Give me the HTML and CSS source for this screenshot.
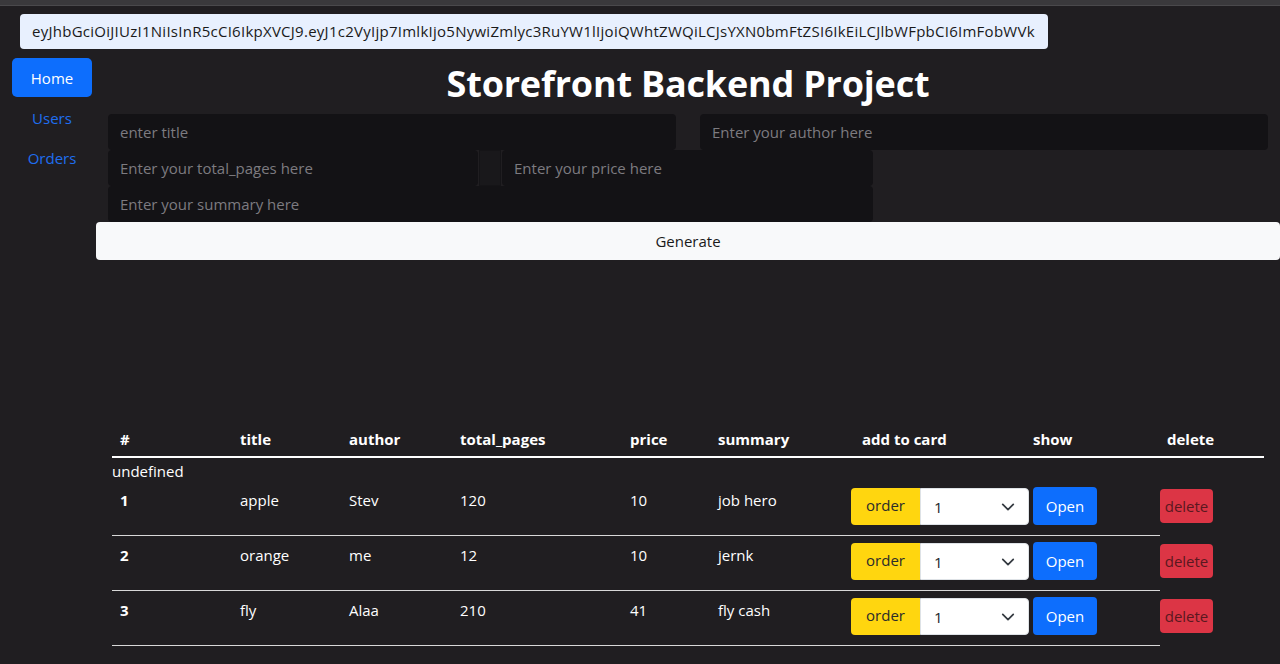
FILE: index.html
```html
<!DOCTYPE html>
<html>
<head>
<meta charset="utf-8">
<link rel="stylesheet" href="styles.css">
</head>
<body>
<div class="topbar"></div>
<div class="token">eyJhbGciOiJIUzI1NiIsInR5cCI6IkpXVCJ9.eyJ1c2VyIjp7ImlkIjo5NywiZmlyc3RuYW1lIjoiQWhtZWQiLCJsYXN0bmFtZSI6IkEiLCJlbWFpbCI6ImFobWVk</div>
<div class="layout">
  <nav class="side">
    <a class="nav-item active">Home</a>
    <a class="nav-item">Users</a>
    <a class="nav-item">Orders</a>
  </nav>
  <main class="content">
    <h1 class="title">Storefront Backend Project</h1>
    <div class="form">
      <div class="row row1">
        <div class="field w568">enter title</div>
        <div class="field w568">Enter your author here</div>
      </div>
      <div class="row row2">
        <div class="field w370">Enter your total_pages here</div>
        <div class="spacer"></div>
        <div class="field w371">Enter your price here</div>
      </div>
      <div class="row row3">
        <div class="field w765">Enter your summary here</div>
      </div>
    </div>
    <button class="generate">Generate</button>

    <table class="books">
      <colgroup>
        <col style="width:120px"><col style="width:109px"><col style="width:111px"><col style="width:170px"><col style="width:88px"><col style="width:141px"><col style="width:182px"><col style="width:127px"><col style="width:104px">
      </colgroup>
      <thead>
        <tr>
          <th>#</th><th>title</th><th>author</th><th>total_pages</th><th>price</th><th>summary</th><th class="h-add">add to card</th><th class="h-show">show</th><th class="h-del">delete</th>
        </tr>
      </thead>
      <tbody>
        <tr class="undef"><td colspan="9">undefined</td></tr>
        <tr>
          <td class="b">1</td><td>apple</td><td>Stev</td><td>120</td><td>10</td><td>job hero</td>
          <td class="act"><div class="group"><span class="btn-order">order</span><span class="select">1<svg class="chev" width="14" height="14" viewBox="0 0 16 16"><path d="M2 5l6 6 6-6" fill="none" stroke="#343a40" stroke-width="2" stroke-linecap="round" stroke-linejoin="round"/></svg></span></div></td>
          <td class="act"><span class="btn-open">Open</span></td>
          <td class="act del"><span class="btn-del">delete</span></td>
        </tr>
        <tr>
          <td class="b">2</td><td>orange</td><td>me</td><td>12</td><td>10</td><td>jernk</td>
          <td class="act"><div class="group"><span class="btn-order">order</span><span class="select">1<svg class="chev" width="14" height="14" viewBox="0 0 16 16"><path d="M2 5l6 6 6-6" fill="none" stroke="#343a40" stroke-width="2" stroke-linecap="round" stroke-linejoin="round"/></svg></span></div></td>
          <td class="act"><span class="btn-open">Open</span></td>
          <td class="act del"><span class="btn-del">delete</span></td>
        </tr>
        <tr>
          <td class="b">3</td><td>fly</td><td>Alaa</td><td>210</td><td>41</td><td>fly cash</td>
          <td class="act"><div class="group"><span class="btn-order">order</span><span class="select">1<svg class="chev" width="14" height="14" viewBox="0 0 16 16"><path d="M2 5l6 6 6-6" fill="none" stroke="#343a40" stroke-width="2" stroke-linecap="round" stroke-linejoin="round"/></svg></span></div></td>
          <td class="act"><span class="btn-open">Open</span></td>
          <td class="act del"><span class="btn-del">delete</span></td>
        </tr>
      </tbody>
    </table>
  </main>
</div>
</body>
</html>
```

FILE: styles.css
```css
html, body {
  margin: 0;
  padding: 0;
}
body {
  background: #201e21;
  color: #ffffff;
  font-family: "Open Sans", "Noto Sans", sans-serif;
  font-size: 15px;
  line-height: 24px;
  height: 664px;
  overflow: hidden;
}
.topbar {
  height: 5px;
  background: #3a393c;
  border-bottom: 1px solid #4a494c;
}
.token {
  margin: 8px 0 0 20px;
  width: 1004px;
  height: 35px;
  line-height: 35px;
  padding: 0 12px;
  background: #e8f0fe;
  color: #1a1a1a;
  border-radius: 4px;
  white-space: nowrap;
  overflow: hidden;
  font-size: 15px;
  letter-spacing: 0.26px;
}
.layout {
  display: flex;
  margin-top: 9px;
}
.side {
  width: 96px;
  flex: none;
  display: flex;
  flex-direction: column;
  align-items: flex-start;
  padding-left: 12px;
  box-sizing: border-box;
}
.nav-item {
  width: 80px;
  height: 40px;
  line-height: 40px;
  text-align: center;
  color: #1f6ef0;
  border-radius: 5px;
  font-size: 15px;
}
.nav-item.active {
  background: #0d6efd;
  color: #ffffff;
  height: 39px;
  line-height: 41px;
  margin-bottom: 1px;
}
.content {
  flex: 1;
  min-width: 0;
}
.title {
  margin: 0;
  text-align: center;
  font-size: 36px;
  font-weight: 700;
  line-height: 52px;
  height: 56px;
  letter-spacing: -0.2px;
}
.form {
  padding-left: 12px;
}
.row {
  display: flex;
  height: 36px;
}
.row1 {
  gap: 24px;
}
.field {
  height: 36px;
  line-height: 36px;
  padding: 0 12px;
  box-sizing: border-box;
  background: #131215;
  color: #7d7b80;
  border-radius: 4px;
  font-size: 15px;
  white-space: nowrap;
}
.w568 { width: 568px; }
.w370 { width: 370px; }
.w371 { width: 371px; }
.w765 { width: 765px; }
.spacer {
  width: 22px;
  height: 36px;
  margin: 0 1px;
  background: #19181b;
  border: 1px solid #151417;
  box-sizing: border-box;
}
.generate {
  display: block;
  width: 100%;
  height: 38px;
  margin: 0;
  border: 0;
  border-radius: 4px;
  background: #f8f9fa;
  color: #1a1a1a;
  font-family: "Open Sans", "Noto Sans", sans-serif;
  font-size: 15px;
  padding: 0;
}
.books {
  margin: 156px 0 0 16px;
  width: 1152px;
  border-collapse: collapse;
  table-layout: fixed;
}
.books th {
  text-align: left;
  font-weight: 700;
  padding: 11px 8px 5px;
  line-height: 24px;
  border-bottom: 2px solid #ffffff;
}
.books th.h-add { padding-left: 11px; }
.books th.h-show { padding-left: 0; }
.books th.h-del { padding-left: 7px; }
.books td {
  padding: 7px 8px 0;
  vertical-align: top;
  line-height: 24px;
  height: 47px;
  border-bottom: 1px solid #d8d8d8;
}
.books tr.undef td {
  padding: 3px 0 0;
  height: 20px;
  line-height: 20px;
  border-bottom: 0;
}
.books td.b { font-weight: 700; }
.books td.act {
  padding: 0 0 4px;
  vertical-align: middle;
}
.books td.del {
  border-bottom: 0;
}
.group {
  display: flex;
}
.btn-order {
  width: 69px;
  height: 37px;
  line-height: 35px;
  text-align: center;
  background: #ffd60f;
  color: #2b2b2b;
  border-radius: 4px 0 0 4px;
  font-size: 15px;
}
.select {
  position: relative;
  width: 109px;
  height: 37px;
  line-height: 37px;
  padding-left: 13px;
  box-sizing: border-box;
  background: #ffffff;
  color: #212529;
  border: 1px solid #dee2e6;
  border-radius: 0 4px 4px 0;
  font-size: 15px;
}
.chev {
  position: absolute;
  right: 13px;
  top: 11px;
}
.btn-open {
  display: inline-block;
  width: 64px;
  height: 38px;
  line-height: 39px;
  text-align: center;
  background: #0d6efd;
  color: #ffffff;
  border-radius: 4px;
  font-size: 15px;
}
.btn-del {
  display: inline-block;
  width: 53px;
  height: 34px;
  line-height: 35px;
  text-align: center;
  background: #dc3545;
  color: #5a1820;
  border-radius: 4px;
  font-size: 15px;
}
```
